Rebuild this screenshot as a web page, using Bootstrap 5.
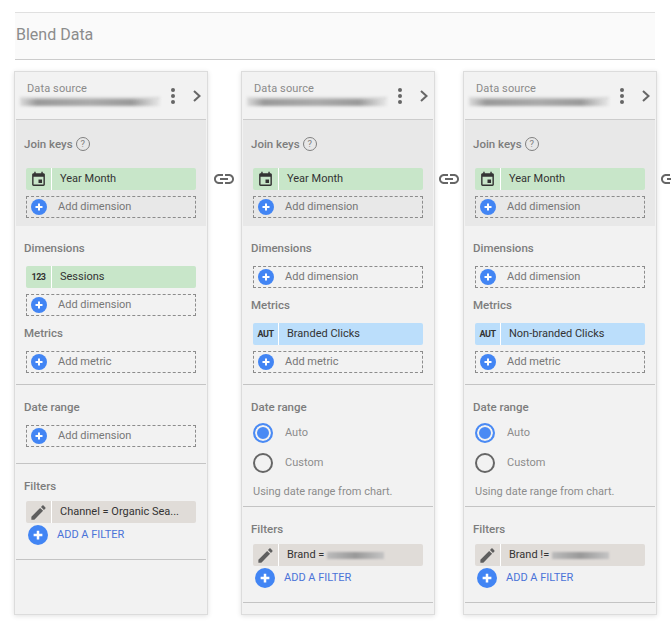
<!DOCTYPE html>
<html lang="en"><head><meta charset="utf-8"><title>Blend Data</title>
<link href="https://cdn.jsdelivr.net/npm/bootstrap@5.3.0/dist/css/bootstrap.min.css" rel="stylesheet">
<style>
html,body{height:631px;overflow:hidden;background:#fff}
body{font-family:Roboto,"Liberation Sans",sans-serif;font-size:11px;color:#333}
.stage{padding-top:12px;padding-left:15px;width:671px;height:631px;overflow:hidden}
.bar-title{width:640px;height:48px;background:#fafafa;border-top:1px solid #e0e0e0;border-bottom:1px solid #ccc;font-size:16px;color:#8c8c8c;padding-left:1px;line-height:44px}
.panels{margin-top:11px;margin-left:-1px;width:720px}
.pane{flex:0 0 194px;height:544px;background:#f2f2f2;border:1px solid #dcdcdc;padding:0 1px;box-shadow:0 1px 5px rgba(0,0,0,.12)}
.pane-top{height:48px;border-bottom:1px solid #ccc;position:relative}
.src-label{padding:10px 0 0 11px;font-size:11px;color:#8a8a8a;line-height:13px;letter-spacing:.12px}
.smear{height:9px;width:140px;margin:2px 0 0 4px;background:linear-gradient(#d8d8d8 0 0) 0 0/100% 2px no-repeat,linear-gradient(90deg,rgba(170,170,170,.3),#999 12%,#aaa 50%,#999 80%,rgba(200,200,200,.2));filter:blur(1.4px)}
.kebab{top:15px;right:30px}
.chev{top:17px;right:4px}
.sect{padding:12px 10px 0 10px;border-bottom:1px solid #c4c4c4}
.sect.joinbox{background:#e8e8e8;border-bottom:0;padding-top:14px;padding-bottom:8px;height:106px}
.lbl{font-size:11.5px;font-weight:500;color:#7d7d7d;line-height:20px;height:20px;margin-bottom:8px;margin-left:-2px}
.lbl.lo{margin-top:7px}
.lbl.tight{margin-bottom:5px}
.lbl.dr{margin-bottom:6px}
.lbl.joinlbl{margin-bottom:14px}
.help{width:14px;height:14px;margin-left:3px;border:1px solid #808080;border-radius:50%;font-size:9.5px;line-height:12px;text-align:center;color:#808080;font-weight:400}
.fld{width:170px;height:22px;margin-bottom:6px;border-radius:2px;line-height:20px;color:#333}
.fld.green{background:#c8e6c9}.fld.blue{background:#bbdefb}.fld.taupe{background:#e0dcd8}
.fld-ico{width:25px;height:22px;border-right:1px solid #fff;flex:0 0 26px}
.fld-txt{padding-left:8px;white-space:nowrap}
.tiny{font-size:9px;font-weight:700;color:#333;letter-spacing:-.5px}
.adder{width:170px;height:22px;border:1px dashed #8c8c8c;color:#777;line-height:20px;padding-left:4px;gap:11px;margin-bottom:6px}
.adder:last-child,.fld:last-child{margin-bottom:0}
.dot{width:16px;height:16px;border-radius:50%;background:#4285f4;flex:none}
.big-dot{width:20px;height:20px;border-radius:50%;background:#4285f4;flex:none;margin-left:2px}
.fld.taupe{margin-bottom:1px}
.filter-add{height:20px;gap:9px;color:#4a72d8;font-size:11px;margin-top:2px}
.radio-row{height:20px;gap:12px;color:#8c8c8c;margin-bottom:10px}
.ring{width:20px;height:20px;border-radius:50%;border:2px solid #666;flex:none}
.ring.on{border-color:#4a8af4;background:#4a8af4;box-shadow:inset 0 0 0 2px #f2f2f2}
.note{color:#8c8c8c;line-height:20px;margin-top:-1px}
.link-a{flex:0 0 33px;padding:96px 0 0 4px}
.link-b{flex:0 0 28px;padding:96px 0 0 2px}
.link-c{flex:0 0 24px;padding:96px 0 0 2px}
.link-a svg,.link-b svg,.link-c svg{display:block}
.blot{display:inline-block;width:57px;height:7px;vertical-align:-1px;background:linear-gradient(90deg,#bbb,#999 50%,#c4c4c4);filter:blur(1.2px)}
.p12{padding-bottom:14px}
.p4{padding-bottom:4px}.p11{padding-bottom:11px}.p16{padding-bottom:16px}
</style></head><body>
<svg width="0" height="0" class="d-block" aria-hidden="true"><defs>
<symbol id="i-cal" viewBox="0 0 24 24"><path d="M17 12h-5v5h5v-5zM16 1v2H8V1H6v2H5c-1.11 0-1.99.9-1.99 2L3 19c0 1.1.89 2 2 2h14c1.1 0 2-.9 2-2V5c0-1.1-.9-2-2-2h-1V1h-2zm3 18H5V8h14v11z" fill="#333"/></symbol>
<symbol id="i-pen" viewBox="0 0 24 24"><path d="M3 17.25V21h3.75L17.81 9.94l-3.75-3.75L3 17.25zM20.71 7.04c.39-.39.39-1.02 0-1.41l-2.34-2.34c-.39-.39-1.02-.39-1.41 0l-1.83 1.83 3.75 3.75 1.83-1.83z" fill="#5f5f5f"/></symbol>
<symbol id="i-link" viewBox="0 0 24 24"><path d="M3.9 12c0-1.71 1.39-3.1 3.1-3.1h4V7H7c-2.76 0-5 2.24-5 5s2.24 5 5 5h4v-1.9H7c-1.71 0-3.1-1.39-3.1-3.1zM8 13h8v-2H8v2zm9-6h-4v1.9h4c1.71 0 3.1 1.39 3.1 3.1s-1.39 3.1-3.1 3.1h-4V17h4c2.76 0 5-2.24 5-5s-2.24-5-5-5z" fill="#666"/></symbol>
<symbol id="i-plus" viewBox="0 0 16 16"><path d="M8 4.5v7M4.5 8h7" stroke="#fff" stroke-width="2" fill="none"/></symbol>
<symbol id="i-kebab" viewBox="0 0 6 18"><circle cx="3" cy="3" r="2" fill="#666"/><circle cx="3" cy="9" r="2" fill="#666"/><circle cx="3" cy="15" r="2" fill="#666"/></symbol>
<symbol id="i-chev" viewBox="0 0 10 14"><path d="M2 2l5.5 5L2 12" stroke="#666" stroke-width="2" fill="none"/></symbol>
</defs></svg>
<div class="stage">
<div class="bar-title">Blend Data</div>
<div class="panels d-flex">

<div class="pane flex-shrink-0">
<div class="pane-top"><div class="src-label">Data source</div><div class="smear"></div>
<svg class="kebab position-absolute" width="6" height="18"><use href="#i-kebab"/></svg><svg class="chev position-absolute" width="10" height="14"><use href="#i-chev"/></svg></div>
<div class="sect joinbox"><div class="lbl joinlbl d-flex align-items-center">Join keys<span class="help">?</span></div>
<div class="fld green d-flex align-items-center"><div class="fld-ico d-flex align-items-center justify-content-center"><svg width="17" height="17"><use href="#i-cal"/></svg></div><div class="fld-txt">Year Month</div></div>
<div class="adder d-flex align-items-center"><span class="dot"><svg width="16" height="16" class="d-block"><use href="#i-plus"/></svg></span>Add dimension</div></div>
<div class="sect p11"><div class="lbl">Dimensions</div>
<div class="fld green d-flex align-items-center"><div class="fld-ico d-flex align-items-center justify-content-center tiny">123</div><div class="fld-txt">Sessions</div></div>
<div class="adder d-flex align-items-center"><span class="dot"><svg width="16" height="16" class="d-block"><use href="#i-plus"/></svg></span>Add dimension</div>
<div class="lbl lo">Metrics</div>
<div class="adder d-flex align-items-center"><span class="dot"><svg width="16" height="16" class="d-block"><use href="#i-plus"/></svg></span>Add metric</div></div>
<div class="sect p16"><div class="lbl">Date range</div>
<div class="adder d-flex align-items-center"><span class="dot"><svg width="16" height="16" class="d-block"><use href="#i-plus"/></svg></span>Add dimension</div></div>
<div class="sect p12"><div class="lbl tight">Filters</div>
<div class="fld taupe d-flex align-items-center"><div class="fld-ico d-flex align-items-center justify-content-center"><svg width="19" height="19"><use href="#i-pen"/></svg></div><div class="fld-txt">Channel = Organic Sea...</div></div>
<div class="filter-add d-flex align-items-center"><span class="big-dot"><svg width="20" height="20" class="d-block" viewBox="0 0 16 16"><use href="#i-plus"/></svg></span>ADD A FILTER</div></div>
</div>

<div class="link-a flex-shrink-0"><svg width="24" height="24"><use href="#i-link"/></svg></div>

<div class="pane flex-shrink-0">
<div class="pane-top"><div class="src-label">Data source</div><div class="smear"></div>
<svg class="kebab position-absolute" width="6" height="18"><use href="#i-kebab"/></svg><svg class="chev position-absolute" width="10" height="14"><use href="#i-chev"/></svg></div>
<div class="sect joinbox"><div class="lbl joinlbl d-flex align-items-center">Join keys<span class="help">?</span></div>
<div class="fld green d-flex align-items-center"><div class="fld-ico d-flex align-items-center justify-content-center"><svg width="17" height="17"><use href="#i-cal"/></svg></div><div class="fld-txt">Year Month</div></div>
<div class="adder d-flex align-items-center"><span class="dot"><svg width="16" height="16" class="d-block"><use href="#i-plus"/></svg></span>Add dimension</div></div>
<div class="sect p11"><div class="lbl">Dimensions</div>
<div class="adder d-flex align-items-center"><span class="dot"><svg width="16" height="16" class="d-block"><use href="#i-plus"/></svg></span>Add dimension</div>
<div class="lbl lo">Metrics</div>
<div class="fld blue d-flex align-items-center"><div class="fld-ico d-flex align-items-center justify-content-center tiny">AUT</div><div class="fld-txt">Branded Clicks</div></div>
<div class="adder d-flex align-items-center"><span class="dot"><svg width="16" height="16" class="d-block"><use href="#i-plus"/></svg></span>Add metric</div></div>
<div class="sect p4"><div class="lbl dr">Date range</div>
<div class="radio-row d-flex align-items-center"><span class="ring on"></span>Auto</div>
<div class="radio-row d-flex align-items-center"><span class="ring"></span>Custom</div>
<div class="note">Using date range from chart.</div></div>
<div class="sect p12"><div class="lbl tight">Filters</div>
<div class="fld taupe d-flex align-items-center"><div class="fld-ico d-flex align-items-center justify-content-center"><svg width="19" height="19"><use href="#i-pen"/></svg></div><div class="fld-txt">Brand = <span class="blot"></span></div></div>
<div class="filter-add d-flex align-items-center"><span class="big-dot"><svg width="20" height="20" class="d-block" viewBox="0 0 16 16"><use href="#i-plus"/></svg></span>ADD A FILTER</div></div>
</div>

<div class="link-b flex-shrink-0"><svg width="24" height="24"><use href="#i-link"/></svg></div>

<div class="pane flex-shrink-0">
<div class="pane-top"><div class="src-label">Data source</div><div class="smear"></div>
<svg class="kebab position-absolute" width="6" height="18"><use href="#i-kebab"/></svg><svg class="chev position-absolute" width="10" height="14"><use href="#i-chev"/></svg></div>
<div class="sect joinbox"><div class="lbl joinlbl d-flex align-items-center">Join keys<span class="help">?</span></div>
<div class="fld green d-flex align-items-center"><div class="fld-ico d-flex align-items-center justify-content-center"><svg width="17" height="17"><use href="#i-cal"/></svg></div><div class="fld-txt">Year Month</div></div>
<div class="adder d-flex align-items-center"><span class="dot"><svg width="16" height="16" class="d-block"><use href="#i-plus"/></svg></span>Add dimension</div></div>
<div class="sect p11"><div class="lbl">Dimensions</div>
<div class="adder d-flex align-items-center"><span class="dot"><svg width="16" height="16" class="d-block"><use href="#i-plus"/></svg></span>Add dimension</div>
<div class="lbl lo">Metrics</div>
<div class="fld blue d-flex align-items-center"><div class="fld-ico d-flex align-items-center justify-content-center tiny">AUT</div><div class="fld-txt">Non-branded Clicks</div></div>
<div class="adder d-flex align-items-center"><span class="dot"><svg width="16" height="16" class="d-block"><use href="#i-plus"/></svg></span>Add metric</div></div>
<div class="sect p4"><div class="lbl dr">Date range</div>
<div class="radio-row d-flex align-items-center"><span class="ring on"></span>Auto</div>
<div class="radio-row d-flex align-items-center"><span class="ring"></span>Custom</div>
<div class="note">Using date range from chart.</div></div>
<div class="sect p12"><div class="lbl tight">Filters</div>
<div class="fld taupe d-flex align-items-center"><div class="fld-ico d-flex align-items-center justify-content-center"><svg width="19" height="19"><use href="#i-pen"/></svg></div><div class="fld-txt">Brand != <span class="blot"></span></div></div>
<div class="filter-add d-flex align-items-center"><span class="big-dot"><svg width="20" height="20" class="d-block" viewBox="0 0 16 16"><use href="#i-plus"/></svg></span>ADD A FILTER</div></div>
</div>

<div class="link-c flex-shrink-0"><svg width="24" height="24"><use href="#i-link"/></svg></div>
</div>
</div>
<script src="https://cdn.jsdelivr.net/npm/bootstrap@5.3.0/dist/js/bootstrap.bundle.min.js"></script>
</body></html>
